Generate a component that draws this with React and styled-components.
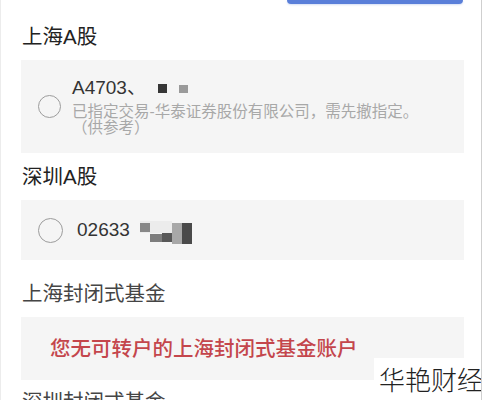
import React from 'react';
import styled, { createGlobalStyle } from 'styled-components';

const Global = createGlobalStyle`
  html, body { margin: 0; padding: 0; background: #fff; }
  body { font-family: "Liberation Sans", "Noto Sans CJK SC", sans-serif; }
`;

const Page = styled.div`
  position: relative;
  width: 482px;
  height: 400px;
  box-sizing: border-box;
  border-left: 1px solid #ececec;
  border-right: 1px solid #cfcfcf;
  padding: 0 17px 0 20px;
  overflow: hidden;
  display: flex;
  flex-direction: column;
`;

const TopBar = styled.div`
  display: flex;
  justify-content: flex-end;
  padding-right: 1px;
`;

const PrimaryButton = styled.div`
  width: 176px;
  height: 4px;
  background: #5a7fd9;
  border-radius: 0 0 4px 4px;
  box-shadow: 0 1px 2px rgba(90, 127, 217, 0.25);
`;

const Section = styled.section`
  display: flex;
  flex-direction: column;
  gap: 9px;
  margin-top: ${(p) => p.$top}px;
  flex-shrink: 0;
`;

const Heading = styled.h2`
  margin: 0;
  padding-left: 1px;
  height: 28px;
  line-height: 28px;
  font-size: 20.5px;
  font-weight: 400;
  color: ${(p) => (p.$muted ? '#454545' : '#222')};
  white-space: nowrap;
`;

const Card = styled.div`
  display: flex;
  align-items: center;
  height: ${(p) => p.$h}px;
  padding-left: ${(p) => p.$pl}px;
  background: #f5f5f5;
  box-sizing: border-box;
`;

const Radio = styled.span`
  flex-shrink: 0;
  width: ${(p) => p.$size}px;
  height: ${(p) => p.$size}px;
  border-radius: 50%;
  border: 1.5px solid #9c9c9c;
  box-sizing: border-box;
  margin-right: ${(p) => p.$gap}px;
`;

const AccountInfo = styled.div`
  display: flex;
  flex-direction: column;
`;

const AccountNo = styled.div`
  display: flex;
  align-items: center;
  font-size: ${(p) => p.$size}px;
  line-height: 22px;
  color: #333;
  white-space: nowrap;
`;

const Mosaic = styled.svg`
  display: block;
  margin-left: ${(p) => p.$ml}px;
  margin-top: ${(p) => p.$mt || 0}px;
  flex-shrink: 0;
`;

const Note = styled.div`
  margin-top: 5px;
  font-size: 15.5px;
  line-height: 16px;
  color: #a8a8a8;
  white-space: nowrap;
`;

const NoteLine = styled.span`
  display: block;
`;

const EmptyMessage = styled.div`
  font-size: 20.5px;
  font-weight: 500;
  line-height: 26px;
  color: #c4464c;
  white-space: nowrap;
`;

const Watermark = styled.div`
  position: absolute;
  right: -1px;
  bottom: 0;
  width: 108px;
  height: 42px;
  box-sizing: border-box;
  padding-left: 5px;
  background: #fff;
  font-family: "Noto Sans CJK SC", sans-serif;
  font-weight: 300;
  font-size: 26px;
  line-height: 42px;
  color: #222;
  white-space: nowrap;
`;

export default function App() {
  return (
    <>
      <Global />
      <Page>
        <TopBar>
          <PrimaryButton />
        </TopBar>

        <Section $top={19}>
          <Heading>上海A股</Heading>
          <Card $h={93} $pl={17}>
            <Radio $size={23} $gap={11} />
            <AccountInfo>
              <AccountNo $size={19}>
                A4703、
                <Mosaic $ml={12} $mt={2} width="30" height="10" viewBox="0 0 30 10">
                  <rect x="0" y="0" width="9" height="9" fill="#363636" />
                  <rect x="21" y="1" width="9" height="8" fill="#9a9a9a" />
                </Mosaic>
              </AccountNo>
              <Note>
                <NoteLine>已指定交易-华泰证券股份有限公司，需先撤指定。</NoteLine>
                <NoteLine>（供参考）</NoteLine>
              </Note>
            </AccountInfo>
          </Card>
        </Section>

        <Section $top={10}>
          <Heading>深圳A股</Heading>
          <Card $h={60} $pl={17}>
            <Radio $size={25} $gap={14} />
            <AccountNo $size={19}>
              02633
              <Mosaic $ml={10} $mt={4} width="52" height="24" viewBox="0 0 52 24">
                <rect x="0" y="1" width="32" height="12" fill="#ececec" />
                <rect x="0" y="3" width="10" height="9" fill="#888" />
                <rect x="10" y="14" width="12" height="8" fill="#7d7d7d" />
                <rect x="22" y="13" width="10" height="9" fill="#585858" />
                <rect x="32" y="3" width="10" height="21" fill="#a8a8a8" />
                <rect x="42" y="3" width="10" height="21" fill="#4a4a4a" />
              </Mosaic>
            </AccountNo>
          </Card>
        </Section>

        <Section $top={20}>
          <Heading $muted>上海封闭式基金</Heading>
          <Card $h={63} $pl={29}>
            <EmptyMessage>您无可转户的上海封闭式基金账户</EmptyMessage>
          </Card>
        </Section>

        <Section $top={8}>
          <Heading $muted>深圳封闭式基金</Heading>
        </Section>

        <Watermark>华艳财经</Watermark>
      </Page>
    </>
  );
}
